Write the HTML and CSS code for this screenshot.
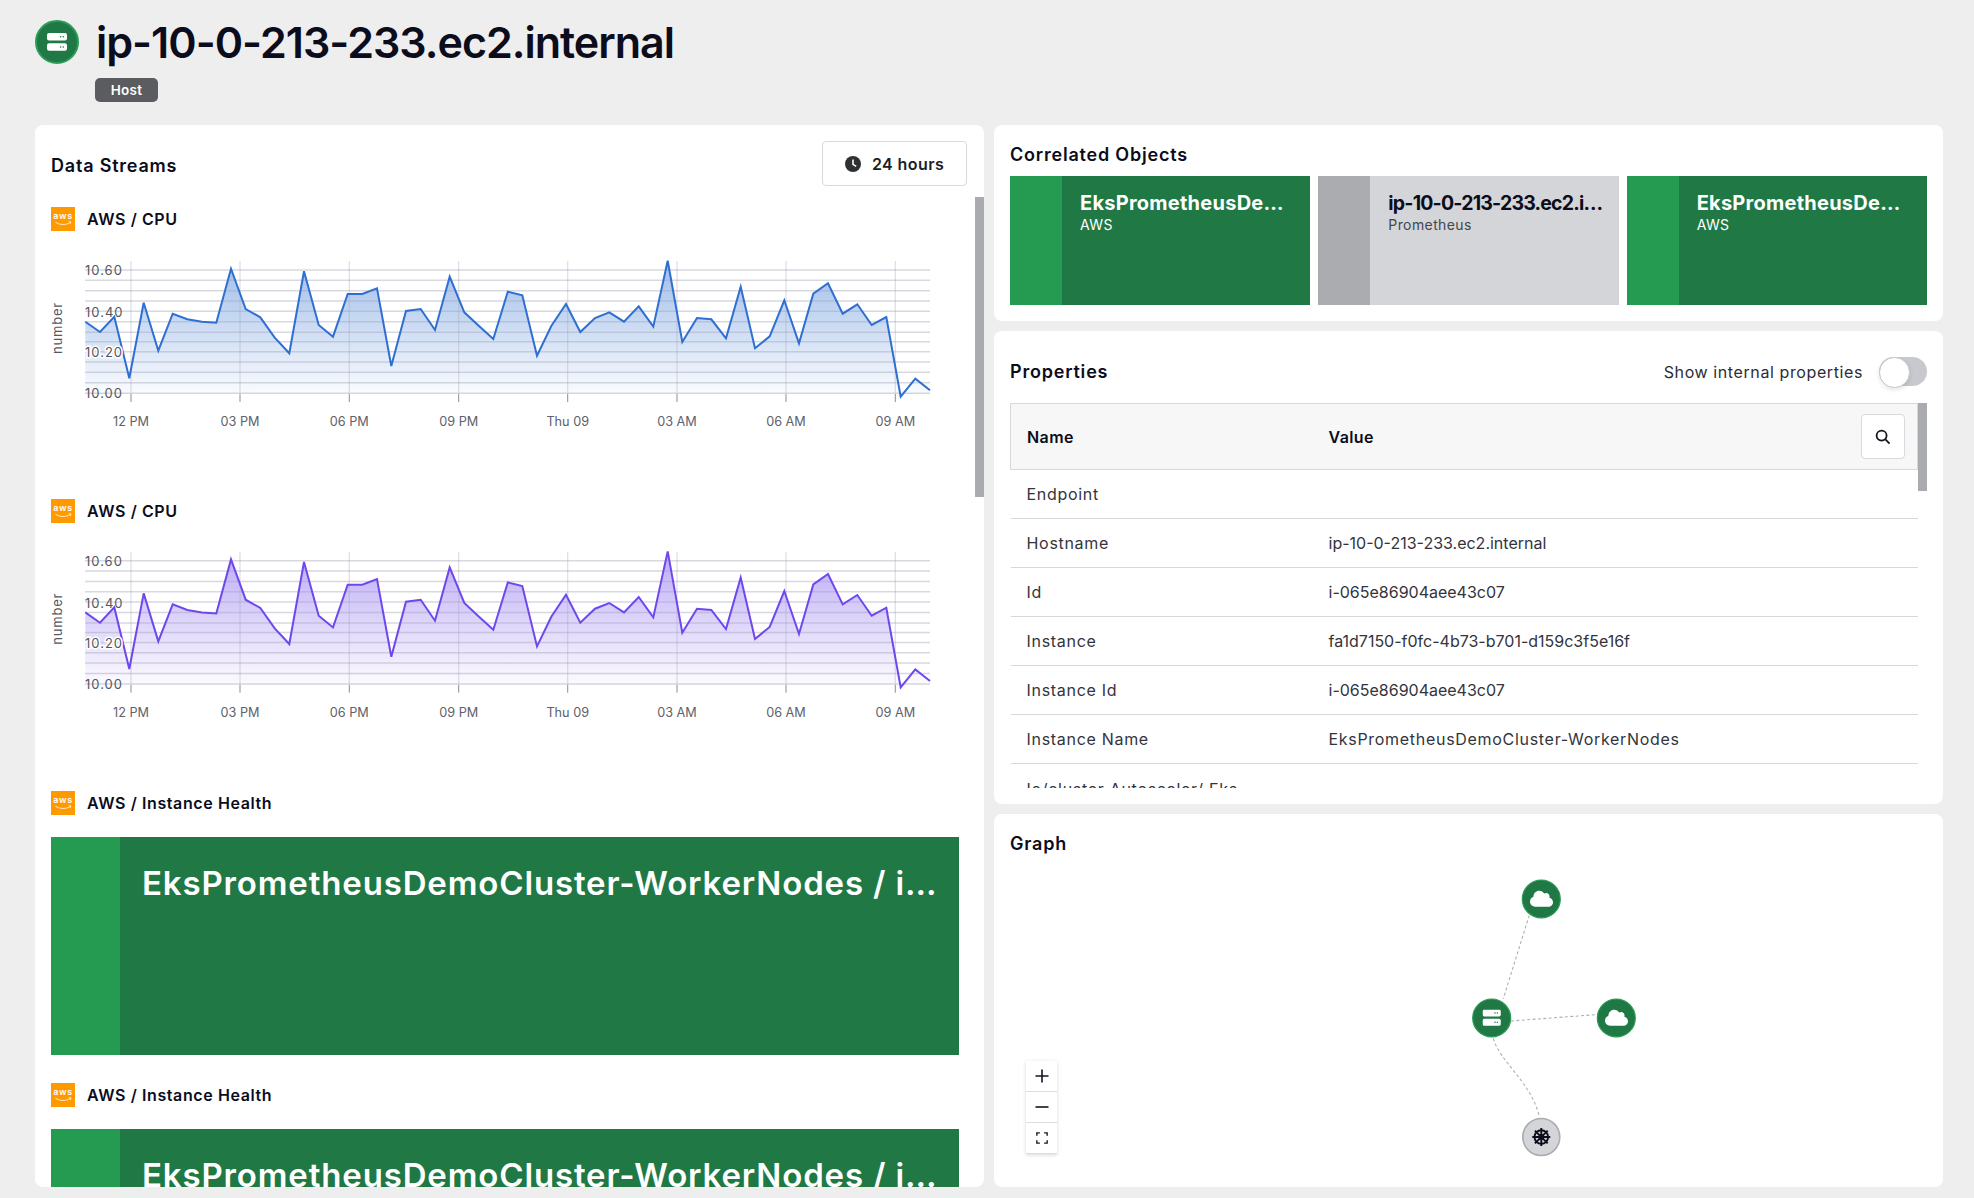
FILE: index.html
```html
<!DOCTYPE html>
<html lang="en">
<head>
  <meta charset="UTF-8">
  <meta name="viewport" content="width=device-width, initial-scale=1.0">
  <link rel="stylesheet" href="styles.css">
  <title>ip-10-0-213-233.ec2.internal</title>
</head>
<body>
  <!-- shared icons -->
  <svg class="icon-defs" width="0" height="0">
    <symbol id="icon-server" viewBox="0 0 20 18">
      <rect x="0" y="0" width="20" height="7.6" rx="2" fill="#fff"/>
      <rect x="0" y="10.2" width="20" height="7.6" rx="2" fill="#fff"/>
      <circle cx="13.6" cy="3.8" r=".8" fill="#207845"/>
      <circle cx="16.2" cy="3.8" r=".8" fill="#207845"/>
      <circle cx="13.6" cy="14" r=".8" fill="#207845"/>
      <circle cx="16.2" cy="14" r=".8" fill="#207845"/>
    </symbol>
    <symbol id="icon-cloud" viewBox="0 0 640 512">
      <path fill="#fff" d="M537.6 226.6c4.1-10.7 6.4-22.4 6.4-34.6 0-53-43-96-96-96-19.7 0-38.1 6-53.3 16.2C367 64.2 315.3 32 256 32c-88.4 0-160 71.6-160 160 0 2.7.1 5.4.2 8.1C40.2 219.8 0 273.2 0 336c0 79.5 64.5 144 144 144h368c70.7 0 128-57.3 128-128 0-61.9-44-113.6-102.4-125.4z"/>
    </symbol>
    <symbol id="icon-aws" viewBox="0 0 24 24">
      <rect width="24" height="24" fill="#ff9900"/>
      <text x="12" y="12.4" text-anchor="middle" font-family="Inter, sans-serif" font-size="9" fill="#fff">aws</text>
      <path d="M4.5 15.2c4.6 3 10.4 3 15 .2" fill="none" stroke="#fff" stroke-width=".8"/>
      <path d="M17.6 14.6l2.3.3-.6 2.2" fill="none" stroke="#fff" stroke-width=".7"/>
    </symbol>
    <linearGradient id="fill-blue" gradientUnits="userSpaceOnUse" x1="0" y1="8" x2="0" y2="142">
      <stop offset="0" stop-color="#2e6fd1" stop-opacity=".46"/>
      <stop offset="1" stop-color="#2e6fd1" stop-opacity=".02"/>
    </linearGradient>
    <linearGradient id="fill-purple" gradientUnits="userSpaceOnUse" x1="0" y1="8" x2="0" y2="142">
      <stop offset="0" stop-color="#6e48ee" stop-opacity=".46"/>
      <stop offset="1" stop-color="#6e48ee" stop-opacity=".02"/>
    </linearGradient>
  </svg>

  <div class="page">
    <header class="page-head">
      <div class="type-icon">
        <svg width="20" height="18"><use href="#icon-server"/></svg>
      </div>
      <div>
        <h1>ip-10-0-213-233.ec2.internal</h1>
        <span class="badge">Host</span>
      </div>
    </header>

    <main class="columns">
      <section class="card streams-card">
        <div class="streams-head">
          <h2>Data Streams</h2>
          <button class="range-button">
            <svg width="18" height="18" viewBox="0 0 18 18">
              <circle cx="9" cy="9" r="8" fill="#2f3034"/>
              <path d="M9 4.4V9.4L12.2 11.4" fill="none" stroke="#fff" stroke-width="1.6"/>
            </svg>
            24 hours
          </button>
        </div>

        <div class="streams">
          <div class="scrollbar streams-scrollbar"></div>

          <div class="stream">
            <div class="stream-title"><svg width="24" height="24"><use href="#icon-aws"/></svg>AWS / CPU</div>
            <svg class="chart" width="908" height="218" viewBox="0 0 908 218">
              <polygon fill="url(#fill-blue)" points="34.3,68.7 49,79 63.3,63.7 78.3,125.3 92.7,49.7 107.3,97.7 121.7,60.7 136.3,66.3 151,68.7 165.3,69.7 180,15.7 194.7,56 209.3,64.3 223.7,84.7 238.3,100.3 253,18.3 267.7,72 282,83.7 296.7,41 311.3,41 326,35.3 340.3,113 355,58 369.7,56 384,77 398.7,23.7 413.3,59.3 427.7,72.7 442.3,86 456.8,38.7 471.3,42.3 486,102.7 500.3,73 515,51 529.3,79 544,65 558.3,59.3 573,68.7 587.7,53.3 602.3,73.7 616.7,7.7 631.3,89 646,65 660.3,66.3 675,85.3 689.7,33.7 704,95.3 718.7,83.3 733.3,47.3 748,90.3 762.3,40.7 777,30.3 791.7,60.7 806.3,51.3 820.7,72 835.3,64 849.7,143.7 864.3,125.7 879,137.3 879,141 34.3,141"/>
              <path class="grid-lines" d="M34 17H879M34 27.3H879M34 37.7H879M34 48H879M34 58.3H879M34 68.7H879M34 79.3H879M34 88.7H879M34 98.7H879M34 109H879M34 119.3H879M34 129.7H879M34 140.3H879"/>
              <path class="grid-verticals" d="M80 8V140M189 8V140M298.3 8V140M407.7 8V140M516.7 8V140M626 8V140M735 8V140M844.3 8V140"/>
              <path class="grid-ticks" d="M80 141V149M189 141V149M298.3 141V149M407.7 141V149M516.7 141V149M626 141V149M735 141V149M844.3 141V149"/>
              <polyline class="line-blue" points="34.3,68.7 49,79 63.3,63.7 78.3,125.3 92.7,49.7 107.3,97.7 121.7,60.7 136.3,66.3 151,68.7 165.3,69.7 180,15.7 194.7,56 209.3,64.3 223.7,84.7 238.3,100.3 253,18.3 267.7,72 282,83.7 296.7,41 311.3,41 326,35.3 340.3,113 355,58 369.7,56 384,77 398.7,23.7 413.3,59.3 427.7,72.7 442.3,86 456.8,38.7 471.3,42.3 486,102.7 500.3,73 515,51 529.3,79 544,65 558.3,59.3 573,68.7 587.7,53.3 602.3,73.7 616.7,7.7 631.3,89 646,65 660.3,66.3 675,85.3 689.7,33.7 704,95.3 718.7,83.3 733.3,47.3 748,90.3 762.3,40.7 777,30.3 791.7,60.7 806.3,51.3 820.7,72 835.3,64 849.7,143.7 864.3,125.7 879,137.3"/>
              <text class="axis-y" x="34" y="22.3">10.60</text>
              <text class="axis-y" x="34" y="64">10.40</text>
              <text class="axis-y halo" x="34" y="104">10.20</text>
              <text class="axis-y" x="34" y="145">10.00</text>
              <text class="axis-name" transform="translate(11 75) rotate(-90)">number</text>
              <g class="axis-x">
                <text x="80" y="173">12 PM</text>
                <text x="189" y="173">03 PM</text>
                <text x="298.3" y="173">06 PM</text>
                <text x="407.7" y="173">09 PM</text>
                <text x="516.7" y="173">Thu 09</text>
                <text x="626" y="173">03 AM</text>
                <text x="735" y="173">06 AM</text>
                <text x="844.3" y="173">09 AM</text>
              </g>
            </svg>
          </div>

          <div class="stream">
            <div class="stream-title"><svg width="24" height="24"><use href="#icon-aws"/></svg>AWS / CPU</div>
            <svg class="chart" width="908" height="218" viewBox="0 1.3 908 218">
              <polygon fill="url(#fill-purple)" points="34.3,68.7 49,79 63.3,63.7 78.3,125.3 92.7,49.7 107.3,97.7 121.7,60.7 136.3,66.3 151,68.7 165.3,69.7 180,15.7 194.7,56 209.3,64.3 223.7,84.7 238.3,100.3 253,18.3 267.7,72 282,83.7 296.7,41 311.3,41 326,35.3 340.3,113 355,58 369.7,56 384,77 398.7,23.7 413.3,59.3 427.7,72.7 442.3,86 456.8,38.7 471.3,42.3 486,102.7 500.3,73 515,51 529.3,79 544,65 558.3,59.3 573,68.7 587.7,53.3 602.3,73.7 616.7,7.7 631.3,89 646,65 660.3,66.3 675,85.3 689.7,33.7 704,95.3 718.7,83.3 733.3,47.3 748,90.3 762.3,40.7 777,30.3 791.7,60.7 806.3,51.3 820.7,72 835.3,64 849.7,143.7 864.3,125.7 879,137.3 879,141 34.3,141"/>
              <path class="grid-lines" d="M34 17H879M34 27.3H879M34 37.7H879M34 48H879M34 58.3H879M34 68.7H879M34 79.3H879M34 88.7H879M34 98.7H879M34 109H879M34 119.3H879M34 129.7H879M34 140.3H879"/>
              <path class="grid-verticals" d="M80 8V140M189 8V140M298.3 8V140M407.7 8V140M516.7 8V140M626 8V140M735 8V140M844.3 8V140"/>
              <path class="grid-ticks" d="M80 141V149M189 141V149M298.3 141V149M407.7 141V149M516.7 141V149M626 141V149M735 141V149M844.3 141V149"/>
              <polyline class="line-purple" points="34.3,68.7 49,79 63.3,63.7 78.3,125.3 92.7,49.7 107.3,97.7 121.7,60.7 136.3,66.3 151,68.7 165.3,69.7 180,15.7 194.7,56 209.3,64.3 223.7,84.7 238.3,100.3 253,18.3 267.7,72 282,83.7 296.7,41 311.3,41 326,35.3 340.3,113 355,58 369.7,56 384,77 398.7,23.7 413.3,59.3 427.7,72.7 442.3,86 456.8,38.7 471.3,42.3 486,102.7 500.3,73 515,51 529.3,79 544,65 558.3,59.3 573,68.7 587.7,53.3 602.3,73.7 616.7,7.7 631.3,89 646,65 660.3,66.3 675,85.3 689.7,33.7 704,95.3 718.7,83.3 733.3,47.3 748,90.3 762.3,40.7 777,30.3 791.7,60.7 806.3,51.3 820.7,72 835.3,64 849.7,143.7 864.3,125.7 879,137.3"/>
              <text class="axis-y" x="34" y="22.3">10.60</text>
              <text class="axis-y" x="34" y="64">10.40</text>
              <text class="axis-y halo" x="34" y="104">10.20</text>
              <text class="axis-y" x="34" y="145">10.00</text>
              <text class="axis-name" transform="translate(11 75) rotate(-90)">number</text>
              <g class="axis-x">
                <text x="80" y="173">12 PM</text>
                <text x="189" y="173">03 PM</text>
                <text x="298.3" y="173">06 PM</text>
                <text x="407.7" y="173">09 PM</text>
                <text x="516.7" y="173">Thu 09</text>
                <text x="626" y="173">03 AM</text>
                <text x="735" y="173">06 AM</text>
                <text x="844.3" y="173">09 AM</text>
              </g>
            </svg>
          </div>

          <div class="stream">
            <div class="stream-title"><svg width="24" height="24"><use href="#icon-aws"/></svg>AWS / Instance Health</div>
            <div class="health-tile">
              <div class="tile-stripe"></div>
              <div class="health-name">EksPrometheusDemoCluster-WorkerNodes / i-065e86904aee43c07</div>
            </div>
          </div>

          <div class="stream">
            <div class="stream-title"><svg width="24" height="24"><use href="#icon-aws"/></svg>AWS / Instance Health</div>
            <div class="health-tile">
              <div class="tile-stripe"></div>
              <div class="health-name">EksPrometheusDemoCluster-WorkerNodes / i-065e86904aee43c07</div>
            </div>
          </div>
        </div>
      </section>

      <div class="side">
        <section class="card correlated-card">
          <h2>Correlated Objects</h2>
          <div class="tiles">
            <div class="tile">
              <div class="tile-stripe"></div>
              <div class="tile-body">
                <div class="tile-name">EksPrometheusDemoCluster-WorkerNodes</div>
                <div class="tile-source">AWS</div>
              </div>
            </div>
            <div class="tile tile-gray">
              <div class="tile-stripe"></div>
              <div class="tile-body">
                <div class="tile-name">ip-10-0-213-233.ec2.internal</div>
                <div class="tile-source">Prometheus</div>
              </div>
            </div>
            <div class="tile">
              <div class="tile-stripe"></div>
              <div class="tile-body">
                <div class="tile-name">EksPrometheusDemoCluster-WorkerNodes</div>
                <div class="tile-source">AWS</div>
              </div>
            </div>
          </div>
        </section>

        <section class="card properties-card">
          <div class="properties-head">
            <h2>Properties</h2>
            <label class="internal-toggle">Show internal properties <span class="toggle"></span></label>
          </div>
          <div class="table-wrap">
            <div class="scrollbar table-scrollbar"></div>
            <table class="props">
              <thead>
                <tr>
                  <th class="col-name">Name</th>
                  <th>Value</th>
                  <th class="col-search">
                    <button class="search-button">
                      <svg width="18" height="18" viewBox="0 0 18 18" fill="none" stroke="#14151f" stroke-width="1.8">
                        <circle cx="7.6" cy="7.6" r="5"/>
                        <path d="M11.4 11.4L15.6 15.6"/>
                      </svg>
                    </button>
                  </th>
                </tr>
              </thead>
              <tbody>
                <tr><td>Endpoint</td><td colspan="2"></td></tr>
                <tr><td>Hostname</td><td class="cell-id" colspan="2">ip-10-0-213-233.ec2.internal</td></tr>
                <tr><td>Id</td><td class="cell-id" colspan="2">i-065e86904aee43c07</td></tr>
                <tr><td>Instance</td><td class="cell-id" colspan="2">fa1d7150-f0fc-4b73-b701-d159c3f5e16f</td></tr>
                <tr><td>Instance Id</td><td class="cell-id" colspan="2">i-065e86904aee43c07</td></tr>
                <tr><td>Instance Name</td><td colspan="2">EksPrometheusDemoCluster-WorkerNodes</td></tr>
                <tr><td class="cell-top">Io/cluster Autoscaler/ Eks</td><td colspan="2"></td></tr>
              </tbody>
            </table>
          </div>
        </section>

        <section class="card graph-card">
          <h2>Graph</h2>
          <svg class="graph" width="949" height="373" viewBox="0 0 949 373">
            <path class="edge" d="M535.3 101.3L509.3 184.6"/>
            <path class="edge" d="M517 207L602.7 200.6"/>
            <path class="edge" d="M499.3 224.6C506 248 537 268 545.3 302.3"/>

            <circle class="node" cx="547.3" cy="85" r="19"/>
            <use href="#icon-cloud" x="536" y="75.5" width="23" height="18.4"/>

            <circle class="node" cx="497.7" cy="204" r="19"/>
            <use href="#icon-server" x="488.5" y="195.5" width="18.4" height="16.5"/>

            <circle class="node" cx="622.3" cy="204" r="19"/>
            <use href="#icon-cloud" x="611" y="194.5" width="23" height="18.4"/>

            <circle class="node node-gray" cx="547.3" cy="323" r="18.5"/>
            <g class="helm" transform="translate(547.3 323)">
              <circle r="6.8"/>
              <circle r="2"/>
              <path d="M0-9V9M-9 0H9M-6.4 -6.4L6.4 6.4M-6.4 6.4L6.4 -6.4"/>
            </g>
          </svg>
          <div class="zoom-controls">
            <button>
              <svg width="14" height="14" viewBox="0 0 14 14"><path d="M7 .5V13.5M.5 7H13.5"/></svg>
            </button>
            <button>
              <svg width="14" height="14" viewBox="0 0 14 14"><path d="M.5 7H13.5"/></svg>
            </button>
            <button>
              <svg width="14" height="14" viewBox="0 0 14 14"><path d="M1 4.5V1H4.5M9.5 1H13V4.5M13 9.5V13H9.5M4.5 13H1V9.5"/></svg>
            </button>
          </div>
        </section>
      </div>
    </main>
  </div>
</body>
</html>
```

FILE: styles.css
```css
* {
  box-sizing: border-box;
}

html, body {
  margin: 0;
  height: 100%;
  overflow: hidden;
}

body {
  background-color: #eeeeee;
  color: #0b0c1c;
  font-family: 'Inter', 'Liberation Sans', sans-serif;
}

.icon-defs {
  position: absolute;
}

h1, h2 {
  margin: 0;
}

h2 {
  font-size: 18px;
  line-height: 22px;
  font-weight: 600;
  letter-spacing: .8px;
}

.page {
  padding: 20px 31px 0 35px;
}

/* header */
.page-head {
  display: flex;
  gap: 17px;
  height: 105px;
}

.type-icon {
  width: 44px;
  height: 44px;
  border-radius: 50%;
  background-color: #207845;
  border: 2px solid #2b9d58;
  display: flex;
  align-items: center;
  justify-content: center;
}

h1 {
  font-size: 43px;
  line-height: 44px;
  font-weight: 600;
  letter-spacing: -1px;
}

.badge {
  display: inline-block;
  margin: 14px 0 0 -1px;
  width: 63px;
  height: 24px;
  line-height: 24px;
  text-align: center;
  background-color: #5b5c5f;
  border-radius: 5px;
  color: #fff;
  font-size: 13.5px;
  font-weight: 600;
  letter-spacing: .3px;
}

/* columns */
.columns {
  display: grid;
  grid-template-columns: minmax(0, 949px) minmax(0, 949px);
  gap: 10px;
  height: 1062px;
}

.card {
  background-color: #fff;
  border-radius: 8px;
  padding: 0 16px;
  min-width: 0;
}

.side {
  display: grid;
  grid-template-rows: 196px 473px 373px;
  gap: 10px;
  min-width: 0;
}

/* data streams */
.streams-card {
  display: flex;
  flex-direction: column;
  overflow: hidden;
  padding-top: 16px;
}

.streams-head {
  display: flex;
  justify-content: space-between;
  align-items: center;
  height: 45px;
}

.streams-head h2 {
  padding-top: 5px;
}

.range-button {
  display: flex;
  align-items: center;
  gap: 10px;
  width: 145px;
  height: 45px;
  margin-right: 1px;
  padding: 0 0 0 21px;
  background-color: #fff;
  border: 1.5px solid #d9dadd;
  border-radius: 4px;
  color: #1c1d28;
  font-family: inherit;
  font-size: 16px;
  font-weight: 600;
  letter-spacing: .4px;
}

.streams {
  position: relative;
  flex: 1;
  margin: 11px -16px 0 0;
  padding-top: 10px;
  overflow: hidden;
}

.scrollbar {
  position: absolute;
  background-color: #aaabae;
  width: 9px;
}

.streams-scrollbar {
  top: 0;
  right: 0;
  height: 300px;
}

.stream {
  width: 908px;
  margin-bottom: 28px;
}

.stream-title {
  display: flex;
  align-items: center;
  gap: 12px;
  height: 24px;
  margin-bottom: 22px;
  font-size: 16px;
  font-weight: 600;
  letter-spacing: .6px;
}

.chart {
  display: block;
}

.grid-lines {
  fill: none;
  stroke: rgba(160, 162, 180, .42);
  stroke-width: 1.5;
}

.grid-verticals {
  fill: none;
  stroke: rgba(160, 162, 180, .36);
  stroke-width: 1.2;
}

.grid-ticks {
  fill: none;
  stroke: #8a8d9a;
  stroke-width: 1;
}

.line-blue, .line-purple {
  fill: none;
  stroke-width: 2;
  stroke-linejoin: miter;
}

.line-blue {
  stroke: #2e6fd1;
}

.line-purple {
  stroke: #6e48ee;
}

.axis-y {
  font-size: 13px;
  letter-spacing: 1px;
  fill: #555660;
}

.halo {
  paint-order: stroke;
  stroke: #fff;
  stroke-width: 3px;
}

.axis-name {
  font-size: 13px;
  letter-spacing: .8px;
  text-anchor: middle;
  fill: #555660;
}

.axis-x text {
  font-size: 12.7px;
  text-anchor: middle;
  fill: #60616b;
}

.health-tile {
  display: flex;
  height: 218px;
  background-color: #207845;
}

.tile-stripe {
  flex: none;
  background-color: #259b52;
}

.health-tile .tile-stripe {
  width: 69px;
}

.health-name {
  min-width: 0;
  flex: 1;
  padding: 25px 14px 0 22px;
  color: #fff;
  font-size: 33px;
  line-height: 42px;
  font-weight: 600;
  letter-spacing: .85px;
  white-space: nowrap;
  overflow: hidden;
  text-overflow: ellipsis;
}

/* correlated objects */
.correlated-card {
  padding-top: 19px;
}

.tiles {
  display: grid;
  grid-template-columns: repeat(3, minmax(0, 1fr));
  gap: 8px;
  margin-top: 10px;
}

.tile {
  display: flex;
  height: 129px;
  background-color: #207845;
  color: #fff;
}

.tile .tile-stripe {
  width: 52px;
}

.tile-body {
  min-width: 0;
  flex: 1;
  padding: 15px 20px 0 18px;
}

.tile-name {
  font-size: 20px;
  line-height: 24px;
  font-weight: 700;
  letter-spacing: .25px;
  white-space: nowrap;
  overflow: hidden;
  text-overflow: ellipsis;
}

.tile-source {
  margin-top: 1px;
  font-size: 14px;
  line-height: 18px;
  letter-spacing: .4px;
}

.tile-gray {
  background-color: #d4d5d9;
  color: #0b0c1c;
}

.tile-gray .tile-stripe {
  background-color: #abacaf;
}

.tile-gray .tile-body {
  padding-right: 14px;
}

.tile-gray .tile-name {
  font-size: 19.5px;
  letter-spacing: -.8px;
}

.tile-gray .tile-source {
  color: #45464e;
}

/* properties */
.properties-head {
  display: flex;
  justify-content: space-between;
  align-items: center;
  padding-top: 26px;
  height: 55px;
}

.internal-toggle {
  display: flex;
  align-items: center;
  gap: 16px;
  font-size: 16px;
  letter-spacing: .6px;
  color: #2c2d35;
}

.toggle {
  position: relative;
  width: 48px;
  height: 29px;
  border-radius: 15px;
  background-color: #c8c9ce;
}

.toggle::after {
  content: "";
  position: absolute;
  left: 0;
  top: 0;
  width: 29px;
  height: 29px;
  border-radius: 50%;
  background-color: #fff;
  border: 1.5px solid #c8c9ce;
  box-shadow: 0 2px 4px rgba(0, 0, 0, .1);
}

.table-wrap {
  position: relative;
  margin-top: 17px;
  height: 385px;
  overflow: hidden;
}

.table-scrollbar {
  top: 0;
  right: 0;
  height: 88px;
}

.props {
  width: 908px;
  border-collapse: collapse;
  table-layout: fixed;
  font-size: 16px;
  letter-spacing: .7px;
  color: #33343c;
}

.props th {
  height: 66px;
  padding: 0 0 0 16px;
  text-align: left;
  background-color: #f7f7f7;
  border-top: 1.5px solid #d8d8d8;
  border-bottom: 1.5px solid #d8d8d8;
  color: #0b0c1c;
  font-weight: 600;
  letter-spacing: .4px;
}

.props th:first-child {
  border-left: 1.5px solid #d8d8d8;
}

.props th:last-child {
  border-right: 1.5px solid #d8d8d8;
}

.col-name {
  width: 302px;
}

.props th.col-search {
  width: 70px;
  padding: 0;
}

.search-button {
  display: flex;
  align-items: center;
  justify-content: center;
  width: 44px;
  height: 45px;
  padding: 0;
  margin-left: 13px;
  background-color: #fff;
  border: 1.5px solid #d9dadd;
  border-radius: 4px;
}

.props td {
  height: 49px;
  padding: 0 0 0 16px;
  border-bottom: 1.5px solid #d8d8d8;
}

.props td.cell-id {
  letter-spacing: 0;
}

.props td.cell-top {
  vertical-align: top;
  padding-top: 15px;
}

/* graph */
.graph-card {
  position: relative;
  padding-top: 19px;
}

.graph {
  position: absolute;
  left: 0;
  top: 0;
}

.edge {
  fill: none;
  stroke: #aeafb4;
  stroke-width: 1.1;
  stroke-dasharray: 3 2.4;
}

.node {
  fill: #207845;
  stroke: #2b9d58;
  stroke-width: 1.2;
}

.node-gray {
  fill: #d4d5d9;
  stroke: #abacaf;
  stroke-width: 1.6;
}

.helm * {
  fill: none;
  stroke: #0b0c1c;
  stroke-width: 1.9;
}

.zoom-controls {
  position: absolute;
  left: 32px;
  top: 247px;
  width: 31px;
  box-shadow: 0 1px 4px rgba(0, 0, 0, .16);
}

.zoom-controls button {
  display: flex;
  align-items: center;
  justify-content: center;
  width: 31px;
  height: 31px;
  padding: 0;
  background-color: #fff;
  border: none;
  border-bottom: 1px solid #dddddd;
}

.zoom-controls svg {
  fill: none;
  stroke: #14151f;
  stroke-width: 1.6;
}

.zoom-controls button:nth-child(3) svg {
  width: 12px;
  height: 12px;
}
```
